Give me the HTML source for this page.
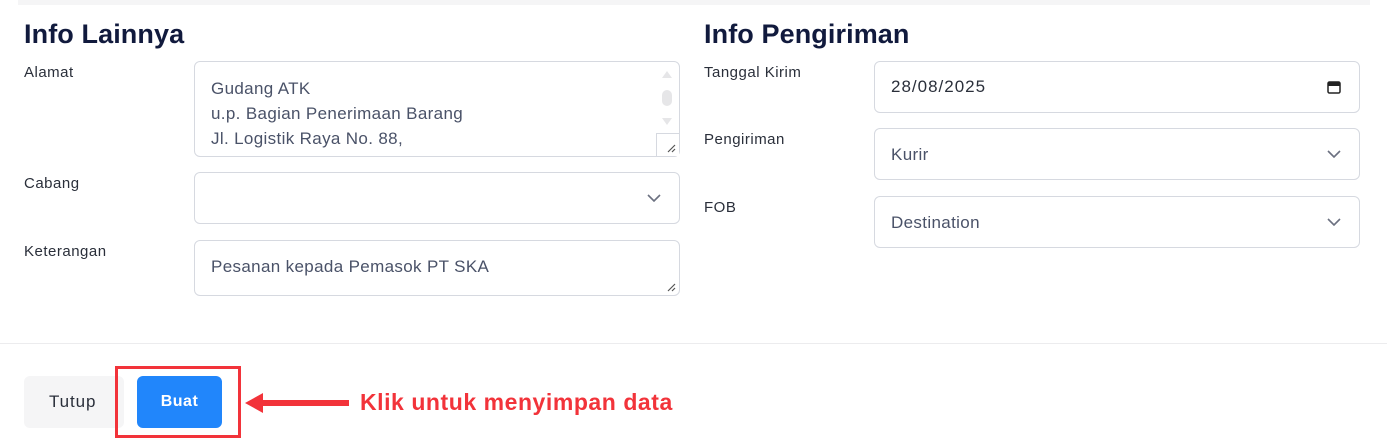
<!DOCTYPE html>
<html><head><style>
body{margin:0;width:1387px;height:446px;background:#fff;font-family:"Liberation Sans",sans-serif;position:relative;overflow:hidden}
.a{position:absolute}
.h{font-size:27px;font-weight:bold;color:#111a3d;letter-spacing:0.1px}
.l{font-size:15px;color:#2a2f3a;letter-spacing:0.5px}
.box{border:1px solid #d6d9e0;border-radius:6px;box-sizing:border-box;background:#fff}
.t{font-size:17px;color:#4a5268;letter-spacing:0.35px}
.chev{position:absolute;right:18px;top:50%;margin-top:-4px}
</style></head><body>
<div class="a" style="left:18px;top:0;width:1352px;height:5px;background:#f5f5f6"></div>
<div class="a h" style="left:24px;top:19px">Info Lainnya</div>
<div class="a h" style="left:704px;top:19px">Info Pengiriman</div>

<div class="a l" style="left:24px;top:64px">Alamat</div>
<div class="a box" style="left:194px;top:61px;width:486px;height:96px">
<div class="a t" style="left:16px;top:14px;line-height:25px">Gudang ATK<br>u.p. Bagian Penerimaan Barang<br>Jl. Logistik Raya No. 88,</div>
<svg class="a" style="left:465px;top:6px" width="14" height="62"><path d="M2 10 L7 3 L12 10Z" fill="#e6e6e8"/><rect x="2" y="22" width="10" height="16" rx="5" fill="#e6e6e8"/><path d="M2 50 L7 57 L12 50Z" fill="#e6e6e8"/></svg>
<div class="a" style="right:0;bottom:0;width:22px;height:22px;border-left:1px solid #d6d9e0;border-top:1px solid #d6d9e0;background:#fff"></div>
<svg class="a" style="right:3px;bottom:3px" width="10" height="10"><path d="M9 2 L2 9 M9 6 L6 9" stroke="#555" stroke-width="1.2"/></svg>
</div>

<div class="a l" style="left:24px;top:175px">Cabang</div>
<div class="a box" style="left:194px;top:172px;width:486px;height:52px">
<svg class="chev" width="14" height="8"><path d="M1 1 L7 7 L13 1" stroke="#6b7080" stroke-width="1.6" fill="none"/></svg></div>

<div class="a l" style="left:24px;top:243px">Keterangan</div>
<div class="a box" style="left:194px;top:240px;width:486px;height:56px">
<div class="a t" style="left:16px;top:16px">Pesanan kepada Pemasok PT SKA</div>
<svg class="a" style="right:3px;bottom:3px" width="10" height="10"><path d="M9 2 L2 9 M9 6 L6 9" stroke="#555" stroke-width="1.2"/></svg></div>

<div class="a l" style="left:704px;top:64px">Tanggal Kirim</div>
<div class="a box" style="left:874px;top:61px;width:486px;height:52px">
<div class="a t" style="left:16px;top:15px;color:#2a2f3a;letter-spacing:1px">28/08/2025</div>
<svg class="a" style="right:18px;top:18px" width="14" height="14"><rect x="1" y="2" width="12" height="11" rx="1.5" fill="none" stroke="#222" stroke-width="1.5"/><rect x="1" y="2" width="12" height="4" fill="#222"/></svg></div>

<div class="a l" style="left:704px;top:131px">Pengiriman</div>
<div class="a box" style="left:874px;top:128px;width:486px;height:52px">
<div class="a t" style="left:16px;top:16px">Kurir</div>
<svg class="chev" width="14" height="8"><path d="M1 1 L7 7 L13 1" stroke="#6b7080" stroke-width="1.6" fill="none"/></svg></div>

<div class="a l" style="left:704px;top:199px">FOB</div>
<div class="a box" style="left:874px;top:196px;width:486px;height:52px">
<div class="a t" style="left:16px;top:16px">Destination</div>
<svg class="chev" width="14" height="8"><path d="M1 1 L7 7 L13 1" stroke="#6b7080" stroke-width="1.6" fill="none"/></svg></div>

<div class="a" style="left:0;top:343px;width:1387px;height:1px;background:#ececee"></div>

<div class="a" style="left:24px;top:376px;width:100px;height:52px;background:#f5f5f6;border-radius:6px"></div>
<div class="a" style="left:49px;top:392px;font-size:17px;color:#2a2f3a;letter-spacing:0.9px">Tutup</div>
<div class="a" style="left:137px;top:376px;width:85px;height:52px;background:#2186fb;border-radius:6px;color:#fff;font-size:16px;font-weight:bold;text-align:center;line-height:52px;letter-spacing:0.5px">Buat</div>
<div class="a" style="left:115px;top:366px;width:126px;height:72px;border:3px solid #f2333a;box-sizing:border-box"></div>
<svg class="a" style="left:243px;top:390px" width="110" height="26"><path d="M2 13 L20 3 L20 10 L106 10 L106 16 L20 16 L20 23Z" fill="#f2333a"/></svg>
<div class="a" style="left:360px;top:389px;font-size:23px;font-weight:bold;color:#f2333a;letter-spacing:0.55px">Klik untuk menyimpan data</div>
</body></html>
